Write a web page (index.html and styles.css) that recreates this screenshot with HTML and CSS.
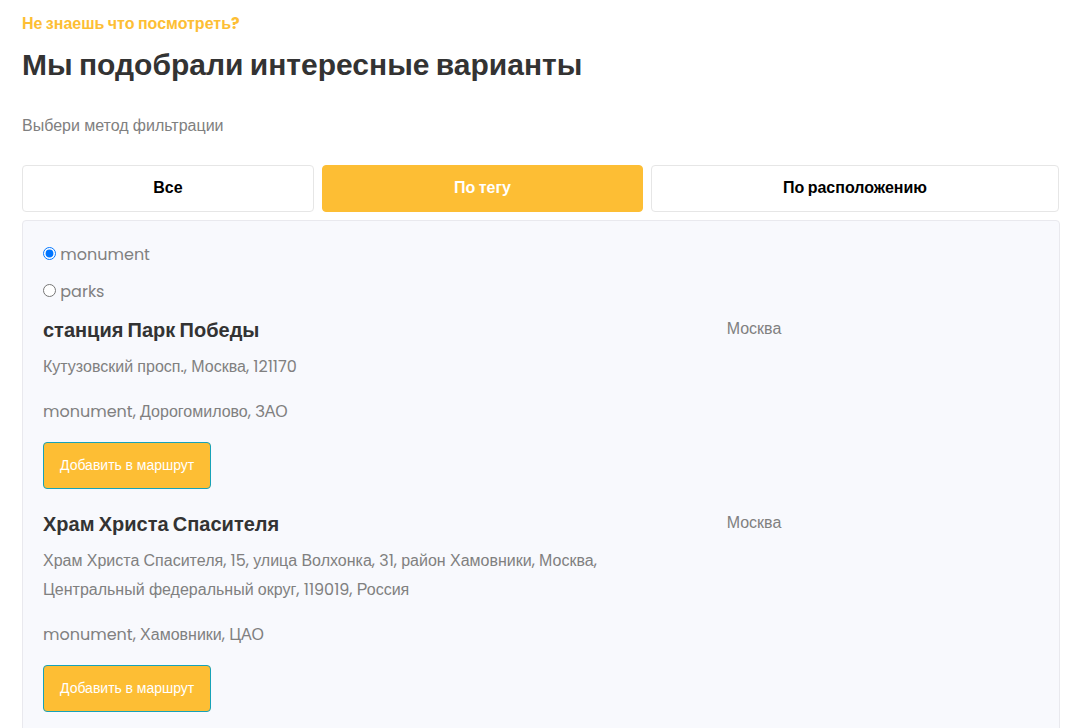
FILE: index.html
```html
<!DOCTYPE html>
<html lang="ru">
<head>
<meta charset="utf-8">
<meta name="viewport" content="width=device-width, initial-scale=1">
<title>Интересные варианты</title>
<link rel="stylesheet" href="styles.css">
</head>
<body>
<main class="page">
  <header class="intro">
    <p class="eyebrow">Не знаешь что посмотреть?</p>
    <h1 class="title">Мы подобрали интересные варианты</h1>
    <p class="lead">Выбери метод фильтрации</p>
  </header>
  <nav class="tabs">
    <button class="tab" type="button">Все</button>
    <button class="tab tab-active" type="button">По тегу</button>
    <button class="tab" type="button">По расположению</button>
  </nav>
  <section class="panel">
    <div class="option"><input type="radio" name="tag" id="tag-monument" checked> <label for="tag-monument">monument</label></div>
    <div class="option"><input type="radio" name="tag" id="tag-parks"> <label for="tag-parks">parks</label></div>
    <article class="place">
      <div class="info">
        <h2 class="name">станция Парк Победы</h2>
        <p class="address">Кутузовский просп., Москва, 121170</p>
        <p class="tags">monument, Дорогомилово, ЗАО</p>
        <button class="add" type="button">Добавить в маршрут</button>
      </div>
      <p class="city">Москва</p>
    </article>
    <article class="place">
      <div class="info">
        <h2 class="name">Храм Христа Спасителя</h2>
        <p class="address">Храм Христа Спасителя, 15, улица Волхонка, 31, район Хамовники, Москва, Центральный федеральный округ, 119019, Россия</p>
        <p class="tags">monument, Хамовники, ЦАО</p>
        <button class="add" type="button">Добавить в маршрут</button>
      </div>
      <p class="city">Москва</p>
    </article>
  </section>
</main>
</body>
</html>
```
FILE: styles.css
```css
* { box-sizing: border-box; }
body {
  margin: 0;
  background: #fff;
  color: #808080;
  font: 16px/29px Poppins, "Liberation Sans", Arial, sans-serif;
}
p, h1, h2 { margin: 0; }
.page { padding: 9px 17px 0 22px; }
.intro { margin-bottom: 25px; }
.eyebrow {
  color: #fdbe34;
  font-weight: 700;
}
.title {
  margin: 9px 0 28px;
  color: #333;
  font-size: 30px;
  font-weight: 700;
  line-height: 36px;
}
.tabs {
  display: grid;
  grid-template-columns: 292fr 321fr 408fr;
  gap: 8px;
  padding-right: 1px;
}
.tab {
  height: 47px;
  padding: 0 6px 2px;
  border: 1px solid #e6e6e6;
  border-radius: 4px;
  background: #fff;
  color: #000;
  font: inherit;
  font-weight: 700;
  line-height: 24px;
}
.tab-active {
  border-color: #fdbe34;
  background: #fdbe34;
  color: #fff;
}
.panel {
  margin-top: 8px;
  padding: 19px 20px;
  border: 1px solid #e9e9ee;
  border-radius: 4px;
  background: #f8f9fd;
}
.option { margin-bottom: 8px; }
.option input {
  width: 13px;
  height: 13px;
  margin: 0;
}
.place {
  display: grid;
  grid-template-columns: 683fr 312fr;
  margin-bottom: 19px;
}
.info { padding-right: 115px; }
.name {
  margin-bottom: 6px;
  color: #333;
  font-size: 20px;
  font-weight: 700;
  line-height: 32px;
}
.address { margin-bottom: 16px; }
.tags { margin-bottom: 16px; }
.add {
  display: block;
  height: 47px;
  padding: 0 16px;
  border: 1px solid #17a2b8;
  border-radius: 4px;
  background: #fdbe34;
  color: #fff;
  font: inherit;
  font-size: 14px;
  line-height: 21px;
}
```
